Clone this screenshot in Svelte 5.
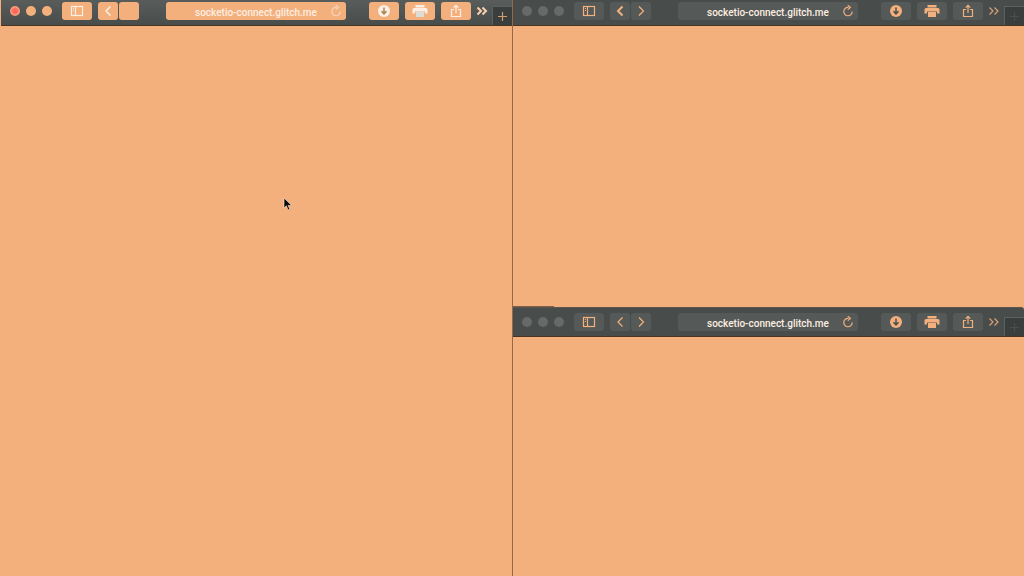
<script lang="ts">
	type BrowserWindow = {
		id: string;
		active: boolean;
		canGoBack: boolean;
	};

	const windows: BrowserWindow[] = [
		{ id: 'main', active: true, canGoBack: true },
		{ id: 'top', active: false, canGoBack: true },
		{ id: 'bottom', active: false, canGoBack: false }
	];

	const url = 'socketio-connect.glitch.me';
</script>

<main class="desktop">
	{#each windows as win (win.id)}
		<section class="window {win.id}" class:active={win.active}>
			<header class="toolbar">
				<div class="lights">
					<button class="light close" aria-label="Close"></button>
					<button class="light" aria-label="Minimize"></button>
					<button class="light" aria-label="Zoom"></button>
				</div>

				<button class="tool" aria-label="Sidebar">
					<svg width="14" height="12" viewBox="0 0 14 12">
						<rect x="1.5" y="1.5" width="11" height="9" />
						<path d="M5.5 1.5v9M3 3.5h1M3 5.5h1" />
					</svg>
				</button>

				<div class="nav">
					<button class="tool" aria-label="Back">
						<svg class:strong={win.canGoBack} width="12" height="12" viewBox="0 0 12 12">
							<path d="M8.5 1.5L4 6L8.5 10.5" />
						</svg>
					</button>
					<button class="tool" aria-label="Forward">
						{#if !win.active}
							<svg width="12" height="12" viewBox="0 0 12 12">
								<path d="M4 1.5L8.5 6L4 10.5" />
							</svg>
						{/if}
					</button>
				</div>

				<div class="address">
					<input type="text" aria-label="Address" value={url} readonly />
					<button class="reload" aria-label="Reload">
						<svg width="12" height="12" viewBox="0 0 12 12">
							<path d="M6.5 2.4A4.2 4.2 0 1 0 10.2 6.6M5.8 .2L8.4 2.4L5.8 4.6" />
						</svg>
					</button>
				</div>

				<div class="actions">
					<button class="tool" aria-label="Downloads">
						<svg width="12" height="12" viewBox="0 0 12 12">
							<circle class="fill" cx="6" cy="6" r="6" />
							<path class="cut" d="M6 2.5v6M3.5 6.2L6 8.8L8.5 6.2" />
						</svg>
					</button>
					<button class="tool" aria-label="Print">
						<svg width="16" height="12" viewBox="0 0 16 12">
							<path class="fill" d="M3.5 0h9v2.5h-9zM2 3h12q1.5 0 1.5 1.5v4h-2.5v-2h-10v2h-2.5v-4q0-1.5 1.5-1.5z" />
							<rect class="fill paper" x="4" y="7" width="8" height="5" />
						</svg>
					</button>
					<button class="tool" aria-label="Share">
						<svg width="12" height="14" viewBox="0 0 12 14">
							<path d="M4 5.5H1.5v7h9v-7H8M6 9V1.5M3.7 3.7L6 1.4L8.3 3.7" />
						</svg>
					</button>
				</div>

				<button class="more" aria-label="More tools">
					<svg width="12" height="10" viewBox="0 0 12 10">
						<path d="M1.5 1.5L5 5L1.5 8.5M6.5 1.5L10 5L6.5 8.5" />
					</svg>
				</button>
				<button class="new-tab" aria-label="New tab">
					<svg width="9" height="9" viewBox="0 0 9 9">
						<path d="M4.5 0v9M0 4.5h9" />
					</svg>
				</button>
			</header>
			<div class="page"></div>
		</section>
	{/each}

	<svg class="cursor" width="10" height="15" viewBox="0 0 10 15">
		<path d="M1 1v10l2.4-2.2L5 13l1.8-.8L5.1 8.4H8.6z" />
	</svg>
</main>

<style>
	:global(body) {
		margin: 0;
		background: #f4b07c;
	}

	.desktop {
		--peach: #f4b07c;
		position: relative;
		display: grid;
		grid-template-columns: 1fr 1fr;
		grid-template-rows: 307fr 269fr;
		min-height: 100vh;
		overflow: hidden;
	}

	.window {
		--icon: var(--peach);
		--tool: #555a58;
		--cut: #4a4f4d;
		position: relative;
		display: flex;
		flex-direction: column;
		min-width: 0;
		background: var(--peach);
		border-left: 1px solid #946848;
	}

	.window.active {
		--icon: #fbefe5;
		--tool: var(--peach);
		--cut: #b08055;
		grid-row: span 2;
		border-left-color: var(--peach);
	}

	.toolbar {
		display: flex;
		align-items: flex-start;
		box-sizing: border-box;
		height: 26px;
		padding: 2px 0 0 9px;
		background: #484c4a;
		border-bottom: 1px solid #4a331f;
	}

	.active .toolbar {
		background: linear-gradient(#585d5b, #484d4b);
	}

	.bottom .toolbar {
		height: 30px;
		padding-top: 5px;
		border-top: 1px solid #5d554b;
		border-top-right-radius: 3px;
	}

	/* edge of the window stacked behind */
	.bottom::before {
		content: '';
		position: absolute;
		top: -1px;
		left: 0;
		width: 41px;
		height: 1px;
		background: #7a5f4a;
	}

	.page {
		flex: 1;
	}

	button {
		display: flex;
		align-items: center;
		justify-content: center;
		flex: none;
		padding: 0;
		border: 0;
		background: none;
	}

	svg {
		display: block;
		fill: none;
		stroke: var(--icon);
		stroke-width: 1.2;
	}

	.strong {
		stroke-width: 2;
	}

	.active .strong {
		stroke-width: 1.5;
	}

	.fill {
		fill: var(--icon);
		stroke: none;
	}

	.cut {
		stroke: var(--cut);
		stroke-width: 1.5;
	}

	.active .paper {
		fill: #d9dedd;
	}

	.lights {
		display: flex;
		align-items: center;
		gap: 6px;
		height: 18px;
		margin-right: 10px;
	}

	.light {
		width: 10px;
		height: 10px;
		border-radius: 50%;
		background: #666a69;
	}

	.active .light {
		background: var(--peach);
	}

	.active .close {
		background: radial-gradient(circle, #ff665c 2px, #f49a78 4px);
	}

	.tool {
		width: 30px;
		height: 18px;
		border-radius: 3px;
		background: var(--tool);
	}

	.nav {
		display: flex;
		gap: 1px;
		margin-left: 6px;
	}

	.nav .tool {
		width: 20px;
	}

	.address {
		position: relative;
		flex: 1;
		min-width: 0;
		margin: 0 23px 0 27px;
	}

	input {
		display: block;
		box-sizing: border-box;
		width: 100%;
		height: 18px;
		padding: 2px 16px 0;
		border: 0;
		border-radius: 3px;
		outline: none;
		background: var(--tool);
		color: #fdeee2;
		font: 500 10px/16px Roboto, 'Liberation Sans', sans-serif;
		text-align: center;
	}

	.reload {
		position: absolute;
		top: 0;
		right: 4px;
		width: 12px;
		height: 18px;
	}

	.active .reload svg {
		stroke: #f4d6c0;
	}

	.actions {
		display: flex;
		gap: 6px;
	}

	.more {
		width: 12px;
		height: 18px;
		margin: 0 4px 0 5px;
	}

	.more svg {
		stroke: #d9a27a;
	}

	.active .more svg {
		stroke: #fbd0ae;
		stroke-width: 2;
	}

	.new-tab {
		align-self: flex-end;
		box-sizing: border-box;
		width: 20px;
		height: 19px;
		border: solid #5c6260;
		border-width: 1px 0 0 1px;
		background: #3a3e3c;
	}

	.new-tab svg {
		stroke: #4a4f4d;
	}

	.active .new-tab svg {
		stroke: #d39b70;
	}

	.cursor {
		position: absolute;
		top: 197px;
		left: 283px;
		fill: #0c0a0a;
		stroke: #fbe6d5;
		stroke-width: 0.6;
	}
</style>
